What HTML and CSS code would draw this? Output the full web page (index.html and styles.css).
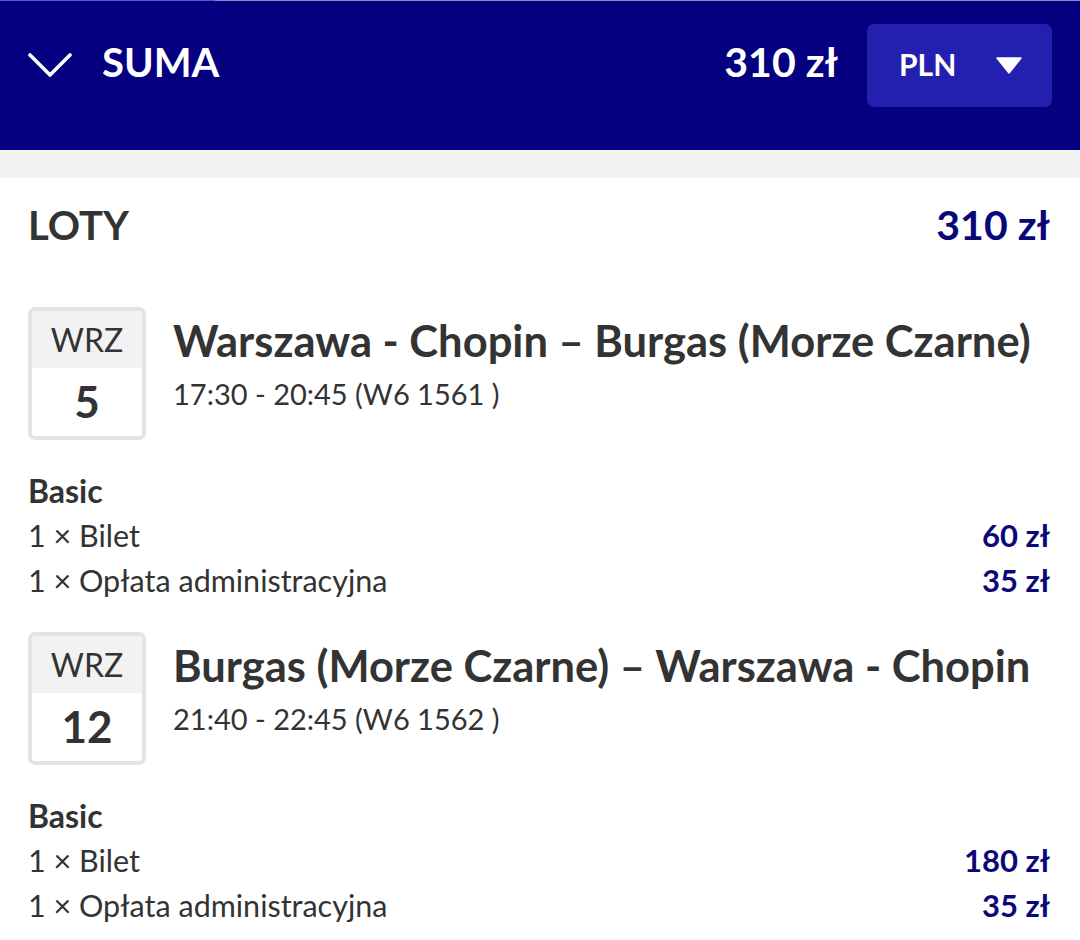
FILE: index.html
```html
<!DOCTYPE html>
<html lang="pl">
<head>
<meta charset="utf-8">
<title>Podsumowanie</title>
<link rel="stylesheet" href="styles.css">
</head>
<body>
<header class="summary-bar">
  <div class="progress"><div class="progress-fill"></div></div>
  <div class="summary-row">
    <div class="summary-title">
      <svg class="chevron" width="44" height="26" viewBox="0 0 44 26" aria-hidden="true">
        <polyline points="2,2 22,22 42,2" fill="none" stroke="#fff" stroke-width="3.6" stroke-linecap="round" stroke-linejoin="round"/>
      </svg>
      <span>SUMA</span>
    </div>
    <div class="summary-right">
      <span class="summary-total">310 zł</span>
      <button class="currency">
        <span>PLN</span>
        <svg width="26" height="17" viewBox="0 0 26 17" aria-hidden="true"><polygon points="1,1 25,1 13,16" fill="#fff" stroke="#fff" stroke-width="1.5" stroke-linejoin="round"/></svg>
      </button>
    </div>
  </div>
</header>

<div class="divider"></div>

<main class="content">
  <div class="section-head">
    <h2>LOTY</h2>
    <span class="price-lg">310 zł</span>
  </div>

  <div class="flight">
    <div class="date-box">
      <div class="month">WRZ</div>
      <div class="day">5</div>
    </div>
    <div class="flight-info">
      <div class="route">Warszawa - Chopin – Burgas (Morze Czarne)</div>
      <div class="time">17:30 - 20:45 (W6 1561 )</div>
    </div>
  </div>
  <div class="fares">
    <div class="fare-name">Basic</div>
    <div class="fare-row"><span>1 × Bilet</span><span class="price">60 zł</span></div>
    <div class="fare-row"><span>1 × Opłata administracyjna</span><span class="price">35 zł</span></div>
  </div>

  <div class="flight">
    <div class="date-box">
      <div class="month">WRZ</div>
      <div class="day">12</div>
    </div>
    <div class="flight-info">
      <div class="route">Burgas (Morze Czarne) – Warszawa - Chopin</div>
      <div class="time">21:40 - 22:45 (W6 1562 )</div>
    </div>
  </div>
  <div class="fares">
    <div class="fare-name">Basic</div>
    <div class="fare-row"><span>1 × Bilet</span><span class="price">180 zł</span></div>
    <div class="fare-row"><span>1 × Opłata administracyjna</span><span class="price">35 zł</span></div>
  </div>
</main>
</body>
</html>
```
FILE: styles.css
```css
* { box-sizing: border-box; }

body {
  margin: 0;
  font-family: Lato, "Noto Sans", sans-serif;
  color: #333333;
  background: #ffffff;
}

/* Top summary bar */
.summary-bar {
  height: 150px;
  background: #05007f;
  color: #ffffff;
}

.progress {
  height: 1px;
  background: #8a88c4;
}

.progress-fill {
  width: 215px;
  height: 1px;
  background: #5856d6;
}

.summary-row {
  display: flex;
  align-items: flex-start;
  justify-content: space-between;
  padding: 23px 28px 0 28px;
}

.summary-title {
  display: flex;
  align-items: flex-start;
  gap: 30px;
  margin-top: 13px;
  font-weight: 700;
  font-size: 40px;
  line-height: 50px;
}

.chevron {
  display: block;
  margin-top: 16px;
}

.summary-right {
  display: flex;
  align-items: flex-start;
  gap: 29px;
}

.summary-total {
  margin-top: 13px;
  font-weight: 700;
  font-size: 41px;
  line-height: 50px;
}

.currency {
  width: 185px;
  height: 83px;
  border: 0;
  border-radius: 7px;
  background: #2320b0;
  color: #ffffff;
  display: flex;
  align-items: center;
  justify-content: space-between;
  padding: 0 30px 3px 32px;
  font-family: inherit;
  font-weight: 700;
  font-size: 30px;
}

.currency svg { display: block; margin-top: 3px; }

.divider {
  height: 28px;
  background: #f2f2f2;
}

/* Flights list */
.content {
  padding: 22px 30px 0 28px;
}

.section-head {
  display: flex;
  justify-content: space-between;
  align-items: baseline;
  margin-bottom: 57px;
}

.section-head h2 {
  margin: 0;
  font-size: 40px;
  line-height: 50px;
  font-weight: 700;
}

.price-lg {
  font-size: 41px;
  line-height: 50px;
  font-weight: 700;
  color: #0a0878;
}

.flight {
  display: flex;
  gap: 27px;
}

.date-box {
  width: 118px;
  height: 133px;
  border: 4px solid #e3e3e3;
  border-radius: 7px;
  overflow: hidden;
  display: flex;
  flex-direction: column;
  flex-shrink: 0;
}

.month {
  height: 57px;
  background: #f2f2f2;
  display: flex;
  align-items: center;
  justify-content: center;
  font-size: 32px;
  font-weight: 400;
}

.day {
  flex: 1;
  display: flex;
  align-items: center;
  justify-content: center;
  font-size: 44px;
  font-weight: 700;
  padding-bottom: 3px;
}

.flight-info {
  padding-top: 8px;
}

.route {
  font-size: 43.5px;
  line-height: 50px;
  font-weight: 700;
  white-space: nowrap;
}

.time {
  margin-top: 11px;
  font-size: 29px;
  line-height: 36px;
}

.fares {
  margin-top: 28px;
  margin-bottom: 29px;
}

.fare-name,
.fare-row {
  font-size: 30.5px;
  line-height: 45px;
}

.fare-name {
  font-size: 32px;
  font-weight: 700;
}

.fare-row {
  display: flex;
  justify-content: space-between;
  align-items: baseline;
}

.price {
  font-size: 31px;
  font-weight: 700;
  color: #0a0878;
}
```
